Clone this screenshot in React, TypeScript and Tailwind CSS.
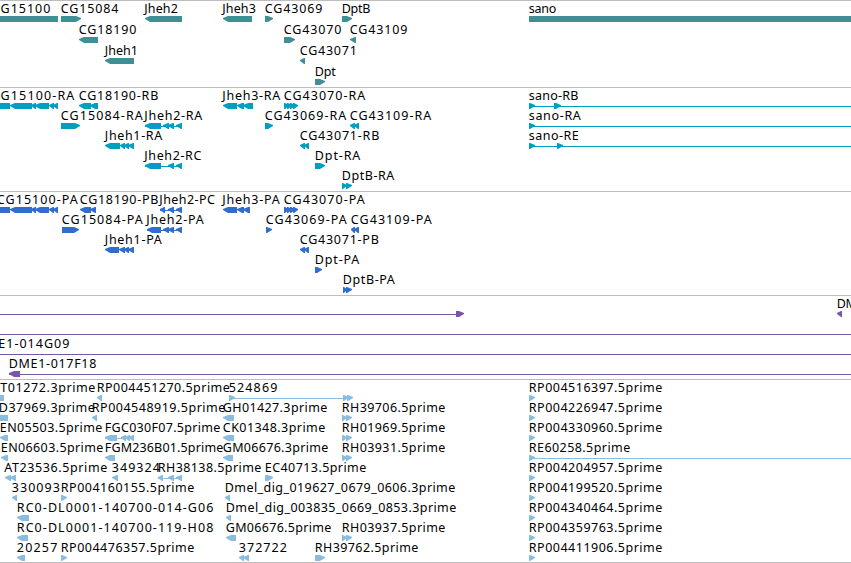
// A block is [start, end, direction]; direction is "<", ">" or "" for a plain bar.
type Block = [number, number, "<" | ">" | ""];

interface Feature {
  label?: string;
  // left and right edge of the label, in pixels
  span?: [number, number];
  blocks?: Block[];
  line?: [number, number];
}

interface TrackData {
  name: string;
  color: string;
  trackClass: string;
  rowClass: string;
  rows: Feature[][];
}

const EDGE = 851;

const f = (label: string, from: number, to: number, blocks: Block[] = [], line?: [number, number]): Feature => ({
  label,
  span: [from, to],
  blocks,
  line,
});

const rp = (label: string): Feature => f(label, 529.5, 661.5, [[529, 535, ">"]]);

const rh = (label: string): Feature =>
  f(label, 342.5, 444.5, [
    [342, 347, ">"],
    [346, 352, ">"],
  ]);

const cg15100: Block[] = [[-10, 10, ""], [10, 32, "<"], [31, 36, "<"], [35, 49, "<"], [49, 54, "<"], [53, 58, "<"]];
const cg43070: Block[] = [[284, 289, ">"], [287, 292, ">"], [290, 295, ">"], [293, 298, ">"]];
const cg43071: Block[] = [[300, 305, "<"], [304, 309, "<"]];

const tracks: TrackData[] = [
  {
    name: "gene",
    color: "#3f8f95",
    trackClass: "h-[87px]",
    rowClass: "h-[21px]",
    rows: [
      [
        f("G15100", 1.3, 49.5, [[-10, 58, ""]]),
        f("CG15084", 61.5, 117.5, [[61, 81, ">"]]),
        f("Jheh2", 145, 177, [[145, 182, "<"]]),
        f("Jheh3", 223, 255, [[223, 252, "<"]]),
        f("CG43069", 265.5, 321.5, [[265, 273, ">"]]),
        f("DptB", 342.5, 369.5, [[342, 352, ">"]]),
        f("sano", 529.5, 555.5, [[529, 860, ""]]),
      ],
      [
        f("CG18190", 79.5, 135.5, [[79, 98, "<"]]),
        f("CG43070", 284.5, 340.5, [[284, 295, ">"]]),
        f("CG43109", 350.5, 406.5, [[350, 356, "<"]]),
      ],
      [f("Jheh1", 105.5, 137, [[105, 134, "<"]]), f("CG43071", 300.5, 356, [[300, 305, "<"]])],
      [f("Dpt", 315.5, 335, [[315, 325, ">"]])],
    ],
  },
  {
    name: "transcript",
    color: "#009ec1",
    trackClass: "h-[104px]",
    rowClass: "h-5",
    rows: [
      [
        f("G15100-RA", 1.3, 73.5, cg15100),
        f("CG18190-RB", 79.5, 157.5, [[79, 91, "<"], [90, 98, "<"]]),
        f("Jheh3-RA", 223, 279.5, [[223, 237, "<"], [237, 244, "<"], [243, 253, "<"]]),
        f("CG43070-RA", 284.5, 364.5, cg43070),
        f("sano-RB", 529.5, 577.5, [[529, 535, ">"], [554, 561, ">"]], [529, EDGE]),
      ],
      [
        f("CG15084-RA", 61.5, 142, [[61, 80, ">"]]),
        f("Jheh2-RA", 145, 201.5, [[145, 161, "<"], [163, 169, "<"], [168, 174, "<"], [176, 182, "<"]], [145, 182]),
        f("CG43069-RA", 265.5, 345.5, [[265, 273, ">"]]),
        f("CG43109-RA", 350.5, 430.5, [[350, 355, "<"], [354, 359, "<"]]),
        f("sano-RA", 529.5, 580, [[529, 535, ">"]], [529, EDGE]),
      ],
      [
        f("Jheh1-RA", 105.5, 161.5, [[105, 120, "<"], [120, 125, "<"], [124, 129, "<"], [128, 134, "<"]]),
        f("CG43071-RB", 300.5, 378.5, cg43071),
        f("sano-RE", 529.5, 578, [[529, 535, ">"], [557, 563, ">"]], [529, EDGE]),
      ],
      [
        f("Jheh2-RC", 145, 200.5, [[145, 161, "<"], [168, 174, "<"], [176, 182, "<"]], [145, 182]),
        f("Dpt-RA", 315.5, 359.5, [[315, 325, ">"]]),
      ],
      [f("DptB-RA", 342.5, 393.5, [[342, 347, ">"], [346, 352, ">"]])],
    ],
  },
  {
    name: "protein",
    color: "#316dcd",
    trackClass: "h-[104px]",
    rowClass: "h-5",
    rows: [
      [
        f("CG15100-PA", -2.5, 77, cg15100),
        f("CG18190-PB", 80.5, 157.5, [[80, 91, "<"], [90, 96, "<"]]),
        f("Jheh2-PC", 160, 214, [[160, 165, "<"], [168, 174, "<"], [176, 182, "<"]], [160, 182]),
        f("Jheh3-PA", 223, 279, [[223, 237, "<"], [237, 244, "<"], [243, 250, "<"]]),
        f("CG43070-PA", 284.5, 364, cg43070),
      ],
      [
        f("CG15084-PA", 62.5, 142, [[62, 79, ">"]]),
        f("Jheh2-PA", 147, 203, [[147, 161, "<"], [163, 169, "<"], [168, 174, "<"], [176, 182, "<"]], [147, 182]),
        f("CG43069-PA", 266.5, 346, [[266, 272, ">"]]),
        f("CG43109-PA", 351.5, 431, [[351, 355, "<"], [354, 359, "<"]]),
      ],
      [
        f("Jheh1-PA", 105.5, 161, [[105, 119, "<"], [119, 125, "<"], [124, 129, "<"], [128, 134, "<"]]),
        f("CG43071-PB", 300.5, 378, cg43071),
      ],
      [f("Dpt-PA", 315.5, 358.5, [[315, 322, ">"]])],
      [f("DptB-PA", 343.5, 394, [[343, 347, ">"], [346, 352, ">"]])],
    ],
  },
  {
    name: "clone",
    color: "#7857ab",
    trackClass: "h-[84px]",
    rowClass: "h-5",
    rows: [
      [{ blocks: [[456, 464, ">"]], line: [0, 460] }, f("DM", 837.5, 856, [[837, 842, "<"]])],
      [{ line: [0, EDGE] }],
      [f("E1-014G09", -1, 68.5, [], [0, EDGE])],
      [f("DME1-017F18", 9.5, 95.5, [[9, 20, "<"]], [9, EDGE])],
    ],
  },
  {
    name: "est",
    color: "#89bcde",
    trackClass: "h-[183px]",
    rowClass: "h-5",
    rows: [
      [
        f("T01272.3prime", 1, 94.5, [[-10, 4, ""]]),
        f("RP004451270.5prime", 97.5, 229, [[97, 102, "<"]]),
        f("524869", 229.5, 276.5, [[229, 235, ">"], [343, 348, ">"], [347, 353, ">"]], [229, 352]),
        rp("RP004516397.5prime"),
      ],
      [
        f("D37969.3prime", -0.5, 94, [[-10, 8, ""]]),
        f("RP004548919.5prime", 92.5, 224.5, [[92, 97, "<"]]),
        f("GH01427.3prime", 223.5, 326.5, [[223, 234, "<"]]),
        rh("RH39706.5prime"),
        rp("RP004226947.5prime"),
      ],
      [
        f("EN05503.5prime", 0.5, 101.5, [[0, 8, "<"]]),
        f("FGC030F07.5prime", 105.5, 219.5, [[105, 117, "<"], [121, 126, "<"], [125, 130, "<"], [129, 134, "<"]], [105, 134]),
        f("CK01348.3prime", 223.5, 324.5, [[223, 234, "<"]]),
        rh("RH01969.5prime"),
        rp("RP004330960.5prime"),
      ],
      [
        f("EN06603.5prime", 1.5, 102.5, [[1, 8, "<"]]),
        f("FGM236B01.5prime", 105.5, 222.5, [[105, 115, "<"]]),
        f("GM06676.3prime", 223.5, 327.5, [[223, 233, "<"]]),
        rh("RH03931.5prime"),
        f("RE60258.5prime", 529.5, 629.5, [[529, 535, ">"]], [529, EDGE]),
      ],
      [
        f("AT23536.5prime", 5, 106.5, [[5, 11, "<"], [10, 16, "<"]]),
        f("349324", 112.5, 159, [[112, 118, "<"]]),
        f("RH38138.5prime", 158.5, 260.5, [[158, 163, "<"], [168, 174, "<"], [176, 182, "<"]], [158, 182]),
        f("EC40713.5prime", 265.5, 365.5, [[265, 273, ">"]]),
        rp("RP004204957.5prime"),
      ],
      [
        f("330093", 12.5, 59, [[12, 17, "<"]]),
        f("RP004160155.5prime", 61.5, 193.5, [[61, 67, ">"]]),
        f("Dmel_dig_019627_0679_0606.3prime", 225.5, 454.5, [[225, 230, "<"]]),
        rp("RP004199520.5prime"),
      ],
      [
        f("RC0-DL0001-140700-014-G06", 17.5, 212.5, [[17, 29, "<"]]),
        f("Dmel_dig_003835_0669_0853.3prime", 226.5, 455.5, [[226, 231, "<"]]),
        rp("RP004340464.5prime"),
      ],
      [
        f("RC0-DL0001-140700-119-H08", 17.5, 212.5, [[17, 28, "<"]]),
        f("GM06676.5prime", 226.5, 330.5, [[226, 236, "<"]]),
        rh("RH03937.5prime"),
        rp("RP004359763.5prime"),
      ],
      [
        f("20257", 17.5, 56.5, [[17, 25, "<"]]),
        f("RP004476357.5prime", 61.5, 193.5, [[61, 67, ">"]]),
        f("372722", 239.5, 286, [[239, 244, "<"], [243, 249, "<"]]),
        f("RH39762.5prime", 315.5, 417.5, [[315, 325, ">"]]),
        rp("RP004411906.5prime"),
      ],
    ],
  },
];

function blockPoints([a, b, dir]: Block) {
  const head = Math.min(6, b - a);
  if (dir === "<") return `${a},17 ${a},18 ${a + head - 1},21 ${b},21 ${b},15 ${a + head - 1},15`;
  if (dir === ">") return `${a},15 ${b - head + 1},15 ${b},17 ${b},18 ${b - head + 1},21 ${a},21`;
  return `${a},15 ${b},15 ${b},21 ${a},21`;
}

function FeatureGlyph({ feature, color }: { feature: Feature; color: string }) {
  const { label, span, blocks = [], line } = feature;
  return (
    <g>
      {line && <rect x={line[0]} y={18} width={line[1] - line[0]} height={1} fill={color} />}
      {blocks.map((block, i) => (
        <polygon key={i} points={blockPoints(block)} fill={color} />
      ))}
      {label && span && (
        <text x={span[0] - 0.7} y={12} textLength={span[1] - span[0] + 1.5} fill="#000">
          {label}
        </text>
      )}
    </g>
  );
}

function Track({ track }: { track: TrackData }) {
  return (
    <section aria-label={track.name} className={`flex flex-col border-t border-[#bdbdbd] ${track.trackClass}`}>
      {track.rows.map((row, i) => (
        <svg key={i} className={`block w-full shrink-0 overflow-visible ${track.rowClass}`}>
          {row.map((feature, j) => (
            <FeatureGlyph key={j} feature={feature} color={track.color} />
          ))}
        </svg>
      ))}
    </section>
  );
}

export default function App() {
  return (
    <main className="flex h-[563px] w-[851px] flex-col overflow-hidden border-b border-[#bdbdbd] bg-white font-['Noto_Sans',sans-serif] text-[12.5px]">
      {tracks.map((track) => (
        <Track key={track.name} track={track} />
      ))}
    </main>
  );
}
